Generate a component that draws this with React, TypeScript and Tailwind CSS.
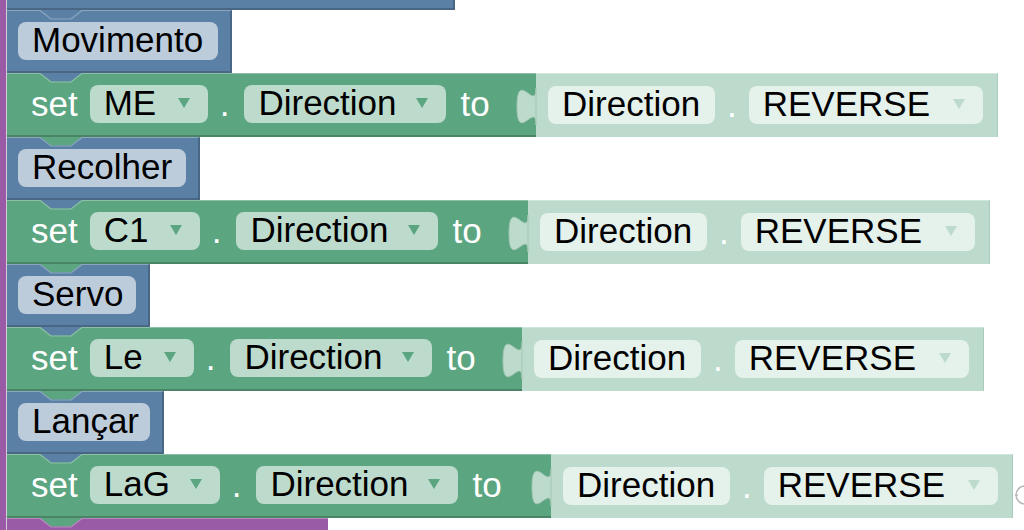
import type { ReactNode } from "react";

const rows = [
  { label: "Movimento", labelW: "w-[200px]", motor: "ME", motorW: "w-[118px]", setW: "w-[529px]" },
  { label: "Recolher", labelW: "w-[168px]", motor: "C1", motorW: "w-[110px]", setW: "w-[521px]" },
  { label: "Servo", labelW: "w-[118px]", motor: "Le", motorW: "w-[104px]", setW: "w-[515px]" },
  { label: "Lançar", labelW: "w-[132px]", motor: "LaG", motorW: "w-[130px]", setW: "w-[544px]" },
];

// notch of the block above, poking into the top edge of this one
const Tab = ({ fill, line }: { fill: string; line: string }) => (
  <svg className="absolute left-[33px] top-[-1px]" width="42" height="11" viewBox="0 0 42 11">
    <polygon points="0,0 11,8.5 31,8.5 42,0" fill={fill} />
    <polyline points="0,0.5 11,9 31,9 42,0.5" fill="none" stroke={line} strokeWidth="1.2" />
  </svg>
);

const Arrow = ({ color }: { color: string }) => (
  <svg className="mt-[2px]" width="12" height="10" viewBox="0 0 12 10">
    <polygon points="0,0 12,0 6,10" fill={color} />
  </svg>
);

const Dropdown = ({ text, w, bg, arrow }: { text: string; w: string; bg: string; arrow: string }) => (
  <div className={`flex h-[38px] items-center justify-between rounded-[8px] pb-[3px] pl-[14px] pr-[18px] text-black ${bg} ${w}`}>
    <span>{text}</span>
    <Arrow color={arrow} />
  </div>
);

const Pill = ({ w, bg, children }: { w: string; bg: string; children: ReactNode }) => (
  <div className={`flex h-[38px] items-center rounded-[8px] px-[14px] pb-[3px] text-black ${bg} ${w}`}>
    {children}
  </div>
);

const App = () => {
  return (
    <div className="flex h-[530px] w-[1024px] overflow-hidden bg-white font-['Liberation_Sans',Arial,sans-serif] text-[35px] leading-none">
      <div className="w-[6px] shrink-0 bg-[#995ba5]" />
      <div className="w-px shrink-0 bg-[#d7cbda]" />
      <div className="flex flex-col">
        <div className="h-[10px] w-[448px] border-r-2 border-b-2 border-[#496684] bg-[#5b80a5]" />

        {rows.map((row, i) => (
          <div key={row.label} className="flex flex-col">
            <div className="relative flex h-[63px] w-fit items-center border-t border-r-2 border-b-2 border-t-[#8ca6c0] border-r-[#496684] border-b-[#496684] bg-[#5b80a5] pl-[11px] pr-[12px]">
              <Tab fill={i === 0 ? "#5b80a5" : "#5ba580"} line="#8ca6c0" />
              <Pill w={row.labelW} bg="bg-[#bdccdb]">
                {row.label}
              </Pill>
            </div>

            <div className="flex items-start">
              <div className={`relative flex h-[64px] items-center gap-[12px] border-t border-b-2 border-t-[#8cc0a6] border-b-[#498466] bg-[#5ba580] pb-[2px] pl-[24px] text-white ${row.setW}`}>
                <Tab fill="#5b80a5" line="#8cc0a6" />
                <span className="-mt-[1px]">set</span>
                <Dropdown text={row.motor} w={row.motorW} bg="bg-[#bddbcc]" arrow="#5ba580" />
                <span className="mr-[3px]">.</span>
                <Dropdown text="Direction" w="w-[202px]" bg="bg-[#bddbcc]" arrow="#5ba580" />
                <span className="-mt-[1px] ml-[2px]">to</span>
              </div>
              <div className="relative flex h-[64px] w-[462px] items-center gap-[12px] border-t border-r border-t-[#cfe6da] border-r-[#a9cbb9] bg-[#bddbcc] pb-[2px] pl-[12px] text-white">
                <svg className="absolute left-[-19px] top-[14px]" width="19" height="37" viewBox="0 0 8 15" preserveAspectRatio="none" overflow="visible">
                  <path d="M8,0 C8,10 0,-8 0,7.5 C0,23 8,5 8,15 Z" fill="#bddbcc" stroke="#a3c7b4" strokeWidth="1" vectorEffect="non-scaling-stroke" />
                </svg>
                <Pill w="w-[167px]" bg="bg-[#e5f1eb]">
                  Direction
                </Pill>
                <span>.</span>
                <Dropdown text="REVERSE" w="w-[234px]" bg="bg-[#e5f1eb]" arrow="#bddbcc" />
              </div>
              {i === rows.length - 1 && (
                <svg className="ml-[2px] mt-[30px]" width="12" height="22" viewBox="0 0 12 22">
                  <path d="M10,2 A9,9 0 0 0 10,20" fill="none" stroke="#b8b8b8" strokeWidth="1.5" />
                  <line x1="0" y1="11" x2="3" y2="11" stroke="#b8b8b8" strokeWidth="1.5" />
                </svg>
              )}
            </div>
          </div>
        ))}

        <div className="relative h-[12px] w-[321px] border-t border-t-[#b88cc0] bg-[#995ba5]">
          <Tab fill="#5ba580" line="#b88cc0" />
        </div>
      </div>
    </div>
  );
};

export default App;
